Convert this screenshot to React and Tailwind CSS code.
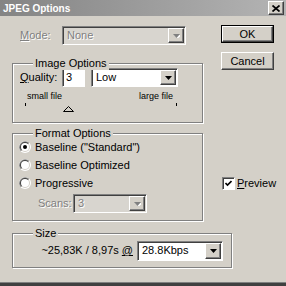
import React from 'react'

const sunken = 'border border-t-[#808080] border-l-[#808080] border-b-white border-r-white shadow-[inset_1px_1px_0_#404040]'
const raised = 'border border-t-white border-l-white border-b-[#404040] border-r-[#404040] shadow-[inset_-1px_-1px_0_#808080]'
const etched = 'text-[#808080] [text-shadow:1px_1px_0_#fff]'

function ArrowButton({ disabled }) {
  return (
    <div className={`w-[16px] h-full bg-[#d4d0c8] flex items-center justify-center ${raised}`}>
      <svg width="7" height="4" viewBox="0 0 7 4">
        {disabled && <path d="M1 1h7L4.5 5z" fill="#fff" />}
        <path d="M0 0h7L3.5 4z" fill={disabled ? '#808080' : '#000'} />
      </svg>
    </div>
  )
}

function Combo({ text, disabled, className }) {
  return (
    <div className={`flex p-[1px] ${sunken} ${disabled ? 'bg-[#d8d5cf]' : 'bg-white'} ${className}`}>
      <span className={`flex-1 flex items-center pl-[3px] ${disabled ? etched : ''}`}>{text}</span>
      <ArrowButton disabled={disabled} />
    </div>
  )
}

function Group({ label, className, children }) {
  return (
    <div className={`relative border border-[#808080] shadow-[inset_1px_1px_0_#fff,1px_1px_0_#fff] ${className}`}>
      <span className="absolute -top-[7px] left-[20px] bg-[#d4d0c8] px-[2px] leading-[13px]">{label}</span>
      {children}
    </div>
  )
}

function Radio({ checked }) {
  return (
    <svg width="12" height="12" viewBox="0 0 12 12" className="shrink-0">
      <circle cx="6" cy="6" r="6" fill="#fff" />
      <path d="M1.76 10.24A6 6 0 0 1 10.24 1.76Z" fill="#808080" />
      <circle cx="6" cy="6" r="5" fill="#d4d0c8" />
      <path d="M2.46 9.54A5 5 0 0 1 9.54 2.46Z" fill="#404040" />
      <circle cx="6" cy="6" r="4" fill="#fff" />
      {checked && <circle cx="6" cy="6" r="2" fill="#000" />}
    </svg>
  )
}

export default function App() {
  return (
    <div className="w-[286px] h-[286px] overflow-hidden bg-[#d4d0c8] flex flex-col font-['Liberation_Sans',Arial,sans-serif] text-[11px] leading-[13px] text-black">
      {/* Title bar */}
      <div className="h-[16px] shrink-0 flex items-center justify-between bg-linear-to-r from-[#848484] to-[#b4b4b4] pl-[3px] pr-[2px]">
        <span className="text-white font-bold text-[10px]">JPEG Options</span>
        <div className={`w-[16px] h-[14px] bg-[#d4d0c8] flex items-center justify-center ${raised}`}>
          <svg width="8" height="7" viewBox="0 0 8 7">
            <path d="M0.5 0.5L7.5 6.5M7.5 0.5L0.5 6.5" stroke="#000" strokeWidth="1.7" />
          </svg>
        </div>
      </div>

      <div className="flex-1 flex flex-col">
        <div className="flex">
          {/* Left column */}
          <div className="ml-[12px] w-[191px] flex flex-col">
            <div className="mt-[10px] h-[19px] flex items-center pl-[8px]">
              <span className={`w-[42px] ${etched}`}><u>M</u>ode:</span>
              <Combo text="None" disabled className="w-[124px] h-full" />
            </div>

            <Group label="Image Options" className="mt-[18px] h-[60px]">
              <div className="mt-[4px] h-[19px] flex items-center pl-[7px]">
                <span className="w-[42px]"><u>Q</u>uality:</span>
                <div className={`w-[23px] h-full bg-white flex items-center pl-[3px] ${sunken}`}>3</div>
                <Combo text="Low" className="ml-[6px] w-[87px] h-full" />
              </div>
              <div className="mt-[4px] h-[11px] flex text-[9px] leading-[11px]">
                <span className="w-[126px] shrink-0 pl-[14px]">small file</span>
                <span>large file</span>
              </div>
              <svg width="189" height="10" viewBox="0 0 189 10" className="block">
                <path d="M12.5 1v3M163.5 1v3" stroke="#000" />
                <path d="M55.5 4.5L60.5 9.5H50.5Z" fill="none" stroke="#000" />
              </svg>
            </Group>

            <Group label="Format Options" className="mt-[10px] h-[88px]">
              <div className="pt-[4px]">
                {[
                  ['Baseline ("Standard")', true],
                  ['Baseline Optimized', false],
                  ['Progressive', false],
                ].map(([t, c]) => (
                  <div key={t} className="h-[18px] flex items-center pl-[6px] gap-[4px]">
                    <Radio checked={c} />
                    <span>{t}</span>
                  </div>
                ))}
                <div className="mt-[2px] h-[19px] flex items-center pl-[25px]">
                  <span className={`w-[35px] ${etched}`}>Scans:</span>
                  <Combo text="3" disabled className="w-[74px] h-full" />
                </div>
              </div>
            </Group>
          </div>

          {/* Right column */}
          <div className="ml-[18px] flex flex-col">
            <div className="mt-[9px] w-[53px] h-[18px] border border-black">
              <div className={`h-full flex items-center justify-center bg-[#d4d0c8] ${raised}`}>OK</div>
            </div>
            <div className={`mt-[9px] w-[53px] h-[18px] flex items-center justify-center bg-[#d4d0c8] ${raised}`}>Cancel</div>
            <div className="mt-[107px] ml-[1px] flex items-center gap-[2px]">
              <div className={`w-[13px] h-[13px] bg-white flex items-center justify-center ${sunken}`}>
                <svg width="7" height="7" viewBox="0 0 7 7">
                  <path d="M0.5 3L2.5 5L6.5 1" fill="none" stroke="#000" strokeWidth="1.6" />
                </svg>
              </div>
              <span><u>P</u>review</span>
            </div>
          </div>
        </div>

        <Group label="Size" className="ml-[12px] mt-[12px] w-[220px] h-[35px]">
          <div className="h-full flex items-center justify-end pr-[8px] gap-[4px]">
            <span>~25,83K / 8,97s <u>@</u></span>
            <Combo text="28.8Kbps" className="w-[86px] h-[20px]" />
          </div>
        </Group>

        <div className="mt-auto h-[4px] border-t border-[#808080] bg-[#404040]" />
      </div>
    </div>
  )
}
